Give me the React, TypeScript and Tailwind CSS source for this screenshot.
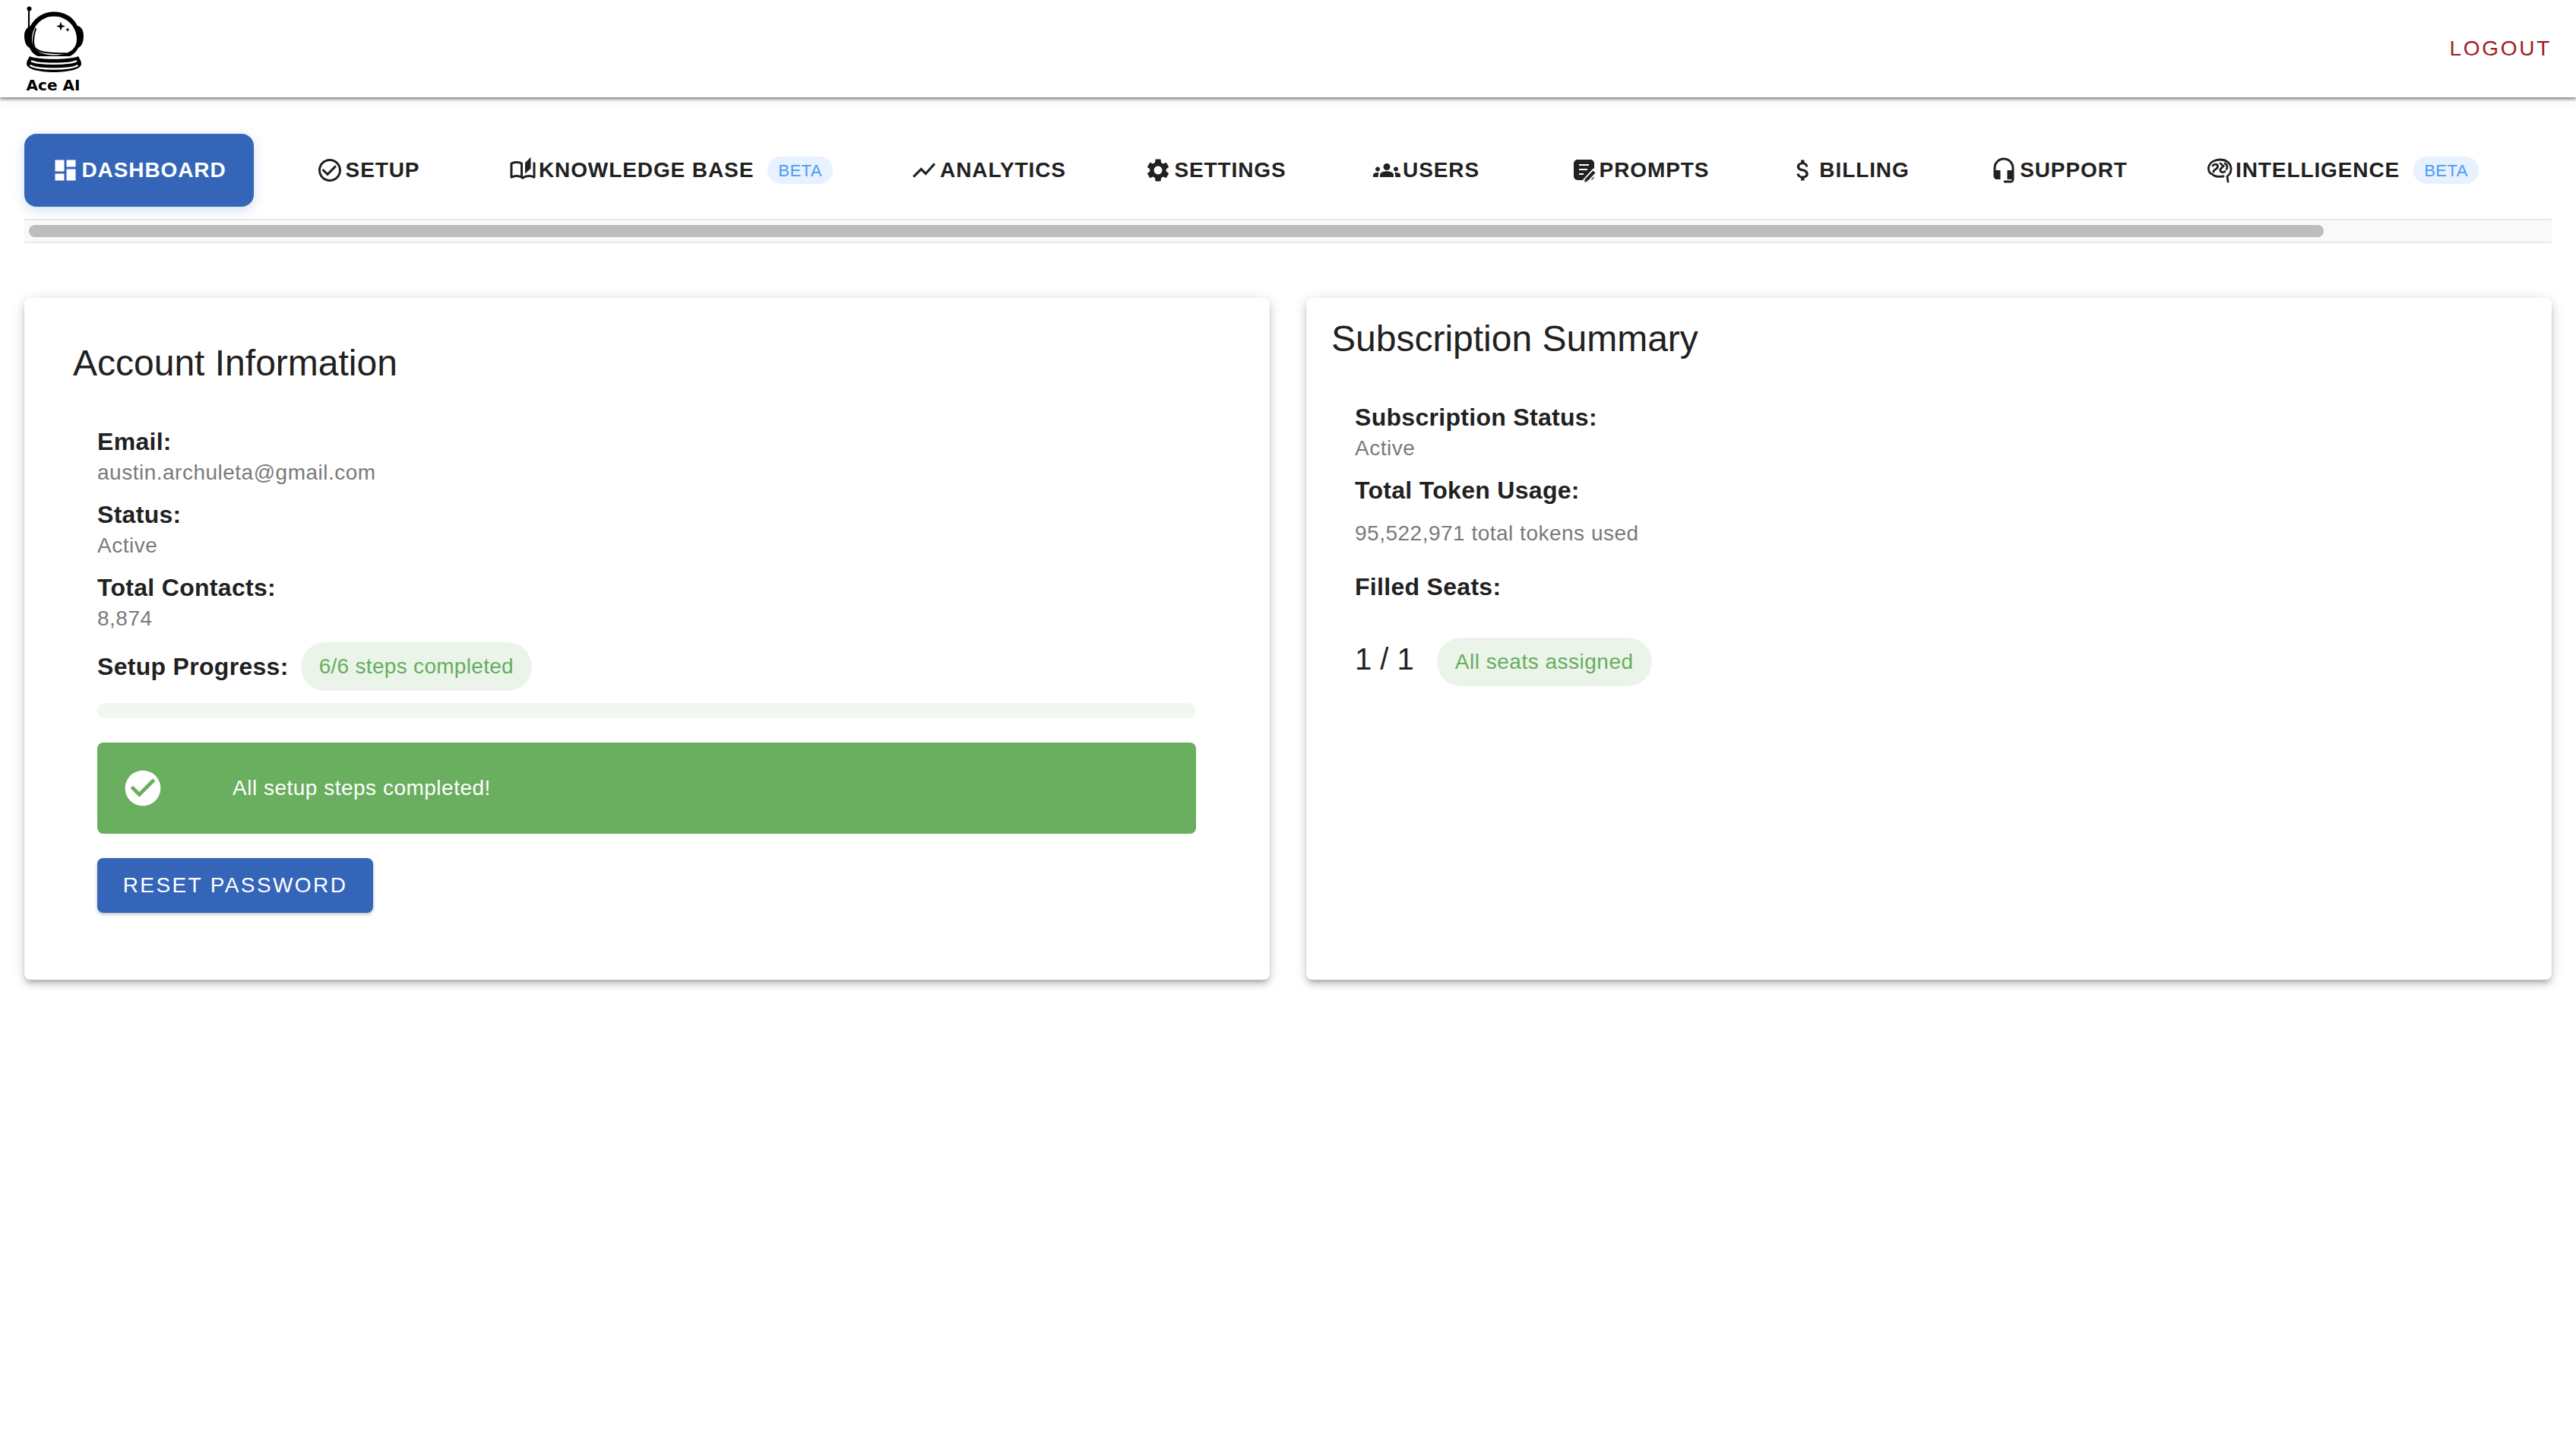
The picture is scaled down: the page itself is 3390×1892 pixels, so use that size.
import React from "react";
import {
  MdDashboard,
  MdCheckCircleOutline,
  MdOutlineAutoStories,
  MdShowChart,
  MdSettings,
  MdGroups,
  MdAttachMoney,
  MdHeadsetMic,
  MdCheckCircle,
} from "react-icons/md";

function PromptIcon({ className }: { className?: string }) {
  return (
    <svg viewBox="0 0 36 36" className={className} fill="none">
      <rect x="5" y="4" width="27" height="27" rx="5" fill="#212121" />
      <path d="M12 11H25M12 17H23M12 23H18" stroke="#fff" strokeWidth="2" />
      <path d="M34 18L20 33" stroke="#fff" strokeWidth="8" />
      <path d="M32 20L22 30.5" stroke="#212121" strokeWidth="4" />
      <path d="M20 28.5L23.5 32.5L19 33.5Z" fill="#212121" />
    </svg>
  );
}

function BrainIcon({ className }: { className?: string }) {
  return (
    <svg viewBox="0 0 36 36" className={className} fill="none" stroke="#212121" strokeLinecap="round">
      <path
        d="M29 33L28 26C32 23 33.500 19 33 15C32 8 26 4 19 4C12 4 5 7 3.500 14C3 17 4 22 8 23C11 26 17 27 23 26"
        strokeWidth="2.800"
      />
      <path d="M9 12C12 9 16 10 15.500 13.500C15 17 10 16.500 10 20" strokeWidth="2.800" />
      <path d="M19 9L23 12.500L19 16.500C18 20 22 22 25 19.500" strokeWidth="2.800" />
      <path d="M25 9C28 11 29 14 27 16.500" strokeWidth="2.800" />
    </svg>
  );
}

function Logo() {
  return (
    <svg viewBox="0 0 160 98" className="w-[160px] h-[98px] shrink-0" fill="none">
      <path d="M38 11V36" stroke="#000" strokeWidth="2.2" />
      <circle cx="38.5" cy="11.5" r="3" fill="#000" />
      <path
        d="M40 34C47 22 58 15.500 71 15.500C85 15.500 96 22 102 34C107 35 110 40 110 47C110 56 107 61 103 63C100 69 96 72 92 74L50 74C45 72 41 68 39 63C35 61 32 56 32 47C32 41 35 36 40 34Z"
        fill="#000"
      />
      <path
        d="M71 21.500C88 21.500 101 35 101 52C101 66 88 72.500 71 72.500C54 72.500 42 66 42 52C42 35 54 21.500 71 21.500Z"
        fill="#fff"
      />
      <path
        d="M47 38C43 50 43 60 47 64C52 69 62 70 88 70.500"
        stroke="#000"
        strokeWidth="2"
        strokeLinecap="round"
      />
      <path d="M80 28.500L81.500 33L86 34.500L81.500 36L80 40.500L78.500 36L74 34.500L78.500 33Z" fill="#000" />
      <path d="M89 36L89.800 38.200L92 39L89.800 39.800L89 42L88.200 39.800L86 39L88.200 38.200Z" fill="#000" />
      <path
        d="M39 74C37 78 35 80 35 84C35 91 52 95 71 95C90 95 107 91 107 84C107 80 105 78 103 74C92 79 50 79 39 74Z"
        fill="#000"
      />
      <path d="M41 80C50 85 92 85 101 80" stroke="#fff" strokeWidth="2.500" />
      <path d="M39.500 86C50 92 92 92 102.500 86" stroke="#fff" strokeWidth="2.500" />
    </svg>
  );
}

type Tab = {
  label: string;
  w: string;
  icon: React.ReactNode;
  beta?: boolean;
  active?: boolean;
};

const iconClass = "w-9 h-9 shrink-0";

const tabs: Tab[] = [
  { label: "DASHBOARD", w: "w-[302px]", icon: <MdDashboard className={iconClass} />, active: true },
  { label: "SETUP", w: "w-[268px]", icon: <MdCheckCircleOutline className={iconClass} /> },
  { label: "KNOWLEDGE BASE", w: "w-[498px]", icon: <MdOutlineAutoStories className={iconClass} />, beta: true },
  { label: "ANALYTICS", w: "w-[305px]", icon: <MdShowChart className={iconClass} /> },
  { label: "SETTINGS", w: "w-[261px]", icon: <MdSettings className={iconClass} /> },
  { label: "USERS", w: "w-[262px]", icon: <MdGroups className={iconClass} /> },
  { label: "PROMPTS", w: "w-[267px]", icon: <PromptIcon className={iconClass} /> },
  { label: "BILLING", w: "w-[254px]", icon: <MdAttachMoney className={iconClass} /> },
  { label: "SUPPORT", w: "w-[265px]", icon: <MdHeadsetMic className={iconClass} /> },
  { label: "INTELLIGENCE", w: "w-[449px]", icon: <BrainIcon className={iconClass} />, beta: true },
];

function Field({ label, value }: { label: string; value: string }) {
  return (
    <div className="mb-[15px]">
      <div className="text-[32px] leading-10 font-bold tracking-[0.3px] text-[#212121]">{label}</div>
      <div className="pt-px text-[28px] leading-10 tracking-[0.5px] text-[#7a7a7a]">{value}</div>
    </div>
  );
}

function Pill({ children, tracking }: { children: React.ReactNode; tracking: string }) {
  return (
    <span className={`${tracking} h-16 px-6 rounded-[32px] bg-[#ebf4e9] text-[#66ae5e] text-[28px] flex items-center`}>
      {children}
    </span>
  );
}

const cardShadow =
  "shadow-[0_6px_6px_-4px_rgba(0,0,0,0.2),0_6px_10px_0_rgba(0,0,0,0.14),0_2px_18px_0_rgba(0,0,0,0.12)]";

export default function App() {
  return (
    <div className="min-h-screen bg-white font-['Liberation_Sans',Arial,sans-serif]">
      <header className="h-[128px] flex items-start justify-between pr-8 bg-white shadow-[0_3px_3px_0_rgba(0,0,0,0.38),0_6px_14px_0_rgba(0,0,0,0.05)]">
        <div className="flex flex-col">
          <Logo />
          <div className="pt-[2px] w-[140px] text-center font-['DejaVu_Sans',sans-serif] font-bold text-[20px] leading-6 text-black">
            Ace AI
          </div>
        </div>
        <div className="h-[128px] flex items-center">
          <span className="text-[28px] tracking-[2.7px] text-[#9e1c24]">LOGOUT</span>
        </div>
      </header>

      <nav className="px-8 pt-12">
        <div className="flex gap-4 h-24">
          {tabs.map((t) => (
            <div
              key={t.label}
              className={
                t.active
                  ? `${t.w} shrink-0 h-24 flex items-center justify-center gap-[3px] rounded-2xl bg-[#3465b9] text-white shadow-[0_4px_16px_rgba(52,101,185,0.22)]`
                  : `${t.w} shrink-0 h-24 flex items-center justify-center gap-[3px] text-[#212121]`
              }
            >
              {t.icon}
              <span className="text-[28px] font-bold tracking-[0.9px] whitespace-nowrap">{t.label}</span>
              {t.beta && (
                <span className="ml-[15px] h-9 px-[14px] rounded-[18px] bg-[#e8f1fe] text-[#4a9bf6] text-[22px] tracking-[0.5px] flex items-center">
                  BETA
                </span>
              )}
            </div>
          ))}
        </div>
        <div className="mt-4 h-8 bg-[#f9f9f9] border-y-2 border-[#e8e8e8] pt-[6px] pl-[6px]">
          <div className="w-[3020px] h-4 rounded-lg bg-[#bdbdbd]" />
        </div>
      </nav>

      <main className="px-8 mt-[72px] flex gap-12 items-stretch">
        <section className={`w-[1639px] h-[897px] rounded-lg bg-white pl-16 pt-[54px] ${cardShadow}`}>
          <h2 className="text-[48px] leading-[64px] text-[#212121] mb-[51px]">Account Information</h2>
          <div className="pl-8 w-[1510px]">
            <Field label="Email:" value="austin.archuleta@gmail.com" />
            <Field label="Status:" value="Active" />
            <Field label="Total Contacts:" value="8,874" />
            <div className="flex items-center gap-4 -mt-1">
              <span className="text-[32px] font-bold tracking-[0.3px] text-[#212121]">Setup Progress:</span>
              <Pill tracking="tracking-[0.3px]">6/6 steps completed</Pill>
            </div>
            <div className="mt-4 h-5 w-[1446px] rounded-[10px] bg-[#f2f7f1]" />
            <div className="mt-8 h-[120px] w-[1446px] rounded-lg bg-[#6aae5f] flex items-center pl-8 text-white">
              <MdCheckCircle className="w-14 h-14 shrink-0" />
              <span className="ml-[90px] text-[28px] tracking-[0.5px]">All setup steps completed!</span>
            </div>
            <div className="mt-8 h-[72px] w-[363px] rounded-lg bg-[#3465b9] text-white text-[28px] tracking-[2.4px] flex items-center justify-center shadow-[0_2px_4px_rgba(0,0,0,0.25)]">
              RESET PASSWORD
            </div>
          </div>
        </section>

        <section className={`w-[1639px] h-[897px] rounded-lg bg-white pl-[33px] pt-[22px] ${cardShadow}`}>
          <h2 className="text-[48px] leading-[64px] text-[#212121] mb-[51px]">Subscription Summary</h2>
          <div className="pl-[31px]">
            <Field label="Subscription Status:" value="Active" />
            <div className="text-[32px] leading-10 font-bold tracking-[0.3px] text-[#212121]">Total Token Usage:</div>
            <div className="mt-[17px] text-[28px] leading-10 tracking-[0.5px] text-[#7a7a7a]">95,522,971 total tokens used</div>
            <div className="mt-[30px] text-[32px] leading-10 font-bold tracking-[0.3px] text-[#212121]">Filled Seats:</div>
            <div className="mt-[45px] flex items-center gap-[30px]">
              <span className="pb-2 text-[40px] text-[#212121]">1 / 1</span>
              <Pill tracking="tracking-[0.5px]">All seats assigned</Pill>
            </div>
          </div>
        </section>
      </main>
    </div>
  );
}
